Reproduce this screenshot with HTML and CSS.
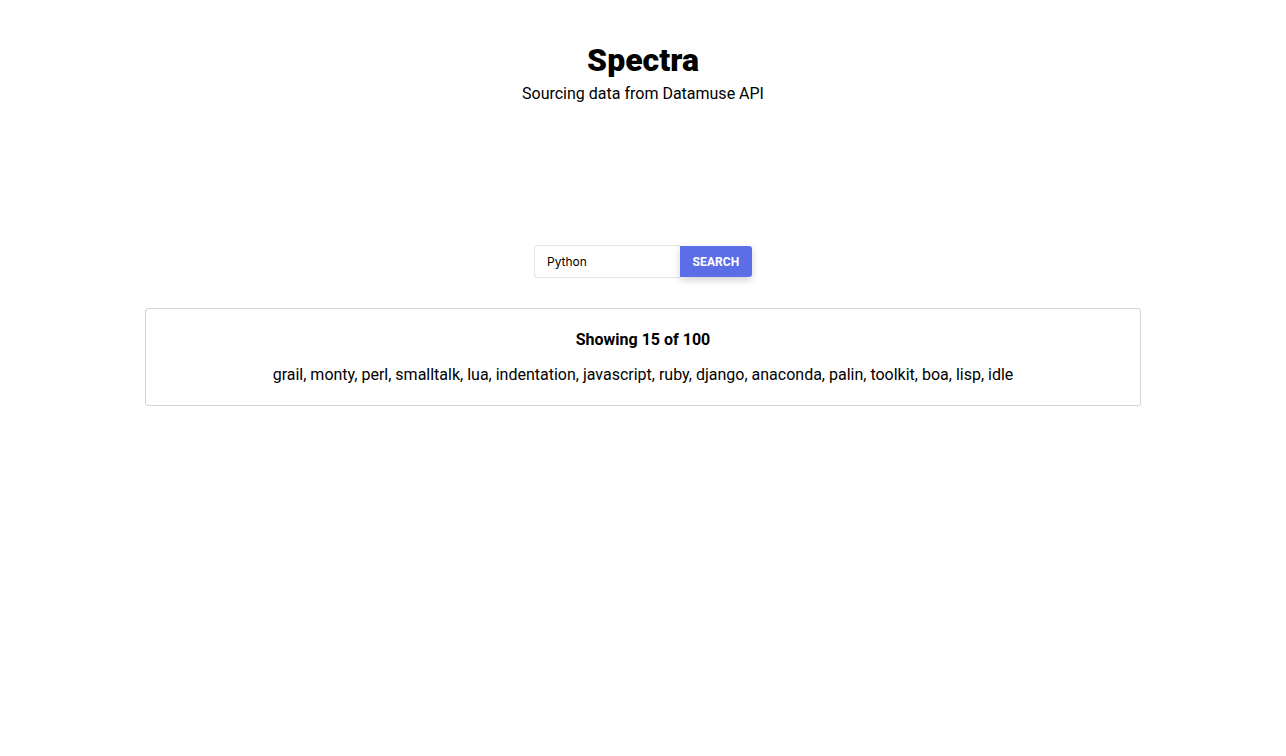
FILE: index.html
```html
<!DOCTYPE html>
<html>
<head>
<meta charset="utf-8">
<link rel="stylesheet" href="styles.css">
</head>
<body>
<header class="header">
  <h1 class="title">Spectra</h1>
  <p class="subtitle">Sourcing data from Datamuse API</p>
</header>
<main class="main">
  <form class="search">
    <input class="search-input" type="text" value="Python">
    <button class="search-btn" type="button">SEARCH</button>
  </form>
  <section class="results">
    <div class="results-count">Showing 15 of 100</div>
    <div class="results-list">grail, monty, perl, smalltalk, lua, indentation, javascript, ruby, django, anaconda, palin, toolkit, boa, lisp, idle</div>
  </section>
</main>
</body>
</html>
```
FILE: styles.css
```css
html, body {
  margin: 0;
  padding: 0;
  background: #fff;
  font-family: Roboto, "Liberation Sans", sans-serif;
  color: #000;
}
.header {
  text-align: center;
  padding-top: 40px;
}
.title {
  margin: 0;
  font-size: 32px;
  font-weight: 900;
  line-height: 40px;
}
.subtitle {
  margin: 0;
  font-size: 16px;
  line-height: 28px;
}
.main {
  display: flex;
  flex-direction: column;
  align-items: center;
  padding-top: 137px;
}
.search {
  display: flex;
  align-items: center;
  margin: 0;
}
.search-input {
  box-sizing: border-box;
  width: 146px;
  height: 33px;
  border: 1px solid #e6e6e6;
  border-right: none;
  border-radius: 3px 0 0 3px;
  padding: 0 12px;
  font-family: Inter, "Noto Sans", sans-serif;
  font-size: 12px;
  color: #000;
  outline: none;
}
.search-btn {
  box-sizing: border-box;
  width: 72px;
  height: 31px;
  border: none;
  border-radius: 0 3px 3px 0;
  background: #5b6ee8;
  color: #fff;
  font-family: Roboto, "Liberation Sans", sans-serif;
  font-weight: 700;
  font-size: 12px;
  letter-spacing: 0.1px;
  box-shadow: 0 3px 8px rgba(0,0,0,0.18);
  padding: 0;
}
.results {
  box-sizing: border-box;
  width: 996px;
  margin-top: 30px;
  border: 1px solid #d3d3d3;
  border-radius: 3px;
  text-align: center;
  padding: 20px 16px 19px;
  font-size: 16px;
}
.results-count {
  font-weight: 700;
  line-height: 22px;
}
.results-list {
  margin-top: 13px;
  line-height: 22px;
}
```
